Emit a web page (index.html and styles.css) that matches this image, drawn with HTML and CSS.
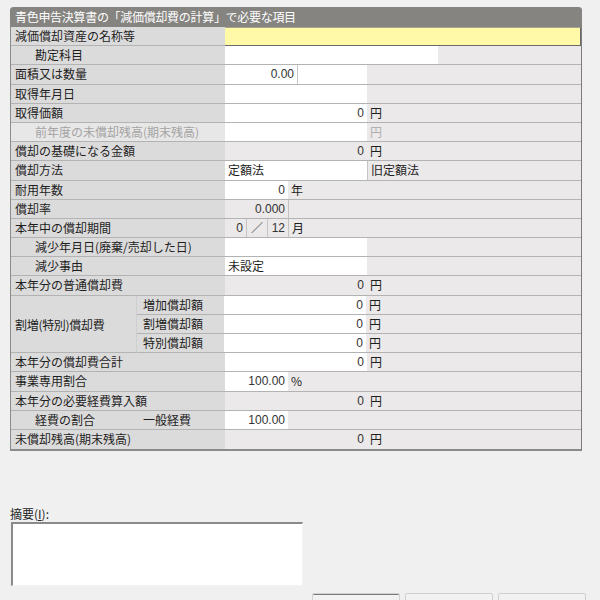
FILE: index.html
```html
<!DOCTYPE html>
<html lang="ja">
<head>
<meta charset="utf-8">
<link rel="stylesheet" href="styles.css">
</head>
<body>
<div class="panel">
  <div class="head">青色申告決算書の「減価償却費の計算」で必要な項目</div>
  <div class="row"><div class="lab">減価償却資産の名称等</div><div class="c yellow"></div></div>
  <div class="row"><div class="lab ind">勘定科目</div><div class="c w213 white"></div><div class="c fill"></div></div>
  <div class="row"><div class="lab">面積又は数量</div><div class="c w72 white num">0.00</div><div class="c w70 white bl"></div><div class="c fill"></div></div>
  <div class="row"><div class="lab">取得年月日</div><div class="c w142 white"></div><div class="c fill"></div></div>
  <div class="row"><div class="lab">取得価額</div><div class="c w142 white num">0</div><div class="c fill unit">円</div></div>
  <div class="row dis"><div class="lab ind">前年度の未償却残高(期末残高)</div><div class="c w142 white"></div><div class="c fill unit">円</div></div>
  <div class="row"><div class="lab">償却の基礎になる金額</div><div class="c w142 num">0</div><div class="c fill unit">円</div></div>
  <div class="row"><div class="lab">償却方法</div><div class="c w142 white txt">定額法</div><div class="c fill txt bl">旧定額法</div></div>
  <div class="row"><div class="lab">耐用年数</div><div class="c w63 white num">0</div><div class="c fill unit">年</div></div>
  <div class="row"><div class="lab">償却率</div><div class="c w63 num">0.000</div><div class="c fill bl"></div></div>
  <div class="row"><div class="lab">本年中の償却期間</div><div class="c w21 num">0</div><div class="c w21 bl slash">／</div><div class="c w21 bl num">12</div><div class="c fill unit bl">月</div></div>
  <div class="row"><div class="lab ind">減少年月日(廃棄/売却した日)</div><div class="c w142 white"></div><div class="c fill"></div></div>
  <div class="row"><div class="lab ind">減少事由</div><div class="c w142 white txt">未設定</div><div class="c fill"></div></div>
  <div class="row"><div class="lab">本年分の普通償却費</div><div class="c w142 num">0</div><div class="c fill unit">円</div></div>
  <div class="group">
    <div class="glab">割増(特別)償却費</div>
    <div class="gsub">
      <div class="row"><div class="sub">増加償却額</div><div class="c w142 white num">0</div><div class="c fill unit">円</div></div>
      <div class="row"><div class="sub">割増償却額</div><div class="c w142 white num">0</div><div class="c fill unit">円</div></div>
      <div class="row"><div class="sub">特別償却額</div><div class="c w142 white num">0</div><div class="c fill unit">円</div></div>
    </div>
  </div>
  <div class="row"><div class="lab">本年分の償却費合計</div><div class="c w142 white num">0</div><div class="c fill unit">円</div></div>
  <div class="row"><div class="lab">事業専用割合</div><div class="c w63 white num">100.00</div><div class="c fill unit">%</div></div>
  <div class="row"><div class="lab">本年分の必要経費算入額</div><div class="c w142 num">0</div><div class="c fill unit">円</div></div>
  <div class="row"><div class="lab2 ind">経費の割合</div><div class="sub">一般経費</div><div class="c w63 white num">100.00</div><div class="c fill"></div></div>
  <div class="row last"><div class="lab">未償却残高(期末残高)</div><div class="c w142 num">0</div><div class="c fill unit">円</div></div>
</div>

<div class="memo">
  <div class="memo-label">摘要(<u>I</u>):</div>
  <div class="memo-box"></div>
</div>

<div class="buttons">
  <div class="btn def"></div>
  <div class="btn"></div>
  <div class="btn"></div>
</div>
</body>
</html>
```

FILE: styles.css
```css
html, body {
  margin: 0;
  padding: 0;
  background: #f0f0f0;
  font-family: "Noto Sans CJK JP", "Noto Sans", sans-serif;
  font-size: 12px;
  color: #1e1e1e;
}
.panel {
  margin: 7px 0 0 10px;
  width: 572px;
  box-sizing: border-box;
  border-left: 1px solid #8c8c8c;
  border-right: 1px solid #7c7c7c;
  border-bottom: 2px solid #8a8a8a;
  border-radius: 4px 4px 0 0;
  background: #ebe9e9;
}
.head {
  height: 20px;
  margin-left: -1px;
  margin-right: -1px;
  background: #858480;
  border-radius: 4px 4px 0 0;
  color: #ffffff;
  line-height: 20px;
  padding-left: 5px;
  letter-spacing: -0.3px;
}
.row {
  display: flex;
  height: 19.2px;
  box-sizing: border-box;
  border-bottom: 1px solid #b3b3b3;
  line-height: 18px;
}
.row.last {
  border-bottom: none;
}
.lab {
  width: 214px;
  flex: none;
  background: #dcdbdb;
  padding-left: 4px;
  box-sizing: border-box;
  white-space: nowrap;
}
.lab.ind, .lab2.ind {
  padding-left: 24px;
}
.lab2 {
  width: 126px;
  flex: none;
  background: #dcdbdb;
  box-sizing: border-box;
  white-space: nowrap;
}
.sub {
  width: 88px;
  flex: none;
  background: #dcdbdb;
  padding-left: 6px;
  box-sizing: border-box;
  white-space: nowrap;
}
.dis .lab {
  background: #e8e7e7;
  color: #a3a3a3;
}
.dis .unit {
  color: #b0b0b0;
}
.c {
  flex: none;
  box-sizing: border-box;
  white-space: nowrap;
  overflow: hidden;
}
.fill {
  flex: 1;
}
.white {
  background: #ffffff;
}
.yellow {
  flex: 1;
  background: #fff9a8;
  border-top: 1px solid #a8a68a;
  border-right: 1px solid #6a6a6a;
  border-bottom: 1px solid #6a6a6a;
  margin-bottom: -1px;
}
.w213 { width: 213px; }
.w142 { width: 142px; }
.w72 { width: 72px; }
.w70 { width: 70px; }
.w63 { width: 63px; }
.w21 { width: 21px; }
.bl {
  border-left: 1px solid #c4c4c4;
}
.num {
  text-align: right;
  padding-right: 3px;
  font-family: "Liberation Sans", "Noto Sans", sans-serif;
  color: #333;
}
.txt {
  padding-left: 3px;
}
.unit {
  padding-left: 3px;
  font-family: "Noto Sans CJK JP", sans-serif;
}
.slash {
  text-align: center;
  color: #555;
}
.group {
  display: flex;
}
.glab {
  width: 126px;
  flex: none;
  height: 57.6px;
  box-sizing: border-box;
  background: #dcdbdb;
  border-bottom: 1px solid #b3b3b3;
  border-right: 1px solid #cfcfcf;
  padding-left: 4px;
  line-height: 57px;
  white-space: nowrap;
  letter-spacing: -0.3px;
}
.gsub {
  flex: 1;
}
.gsub .sub {
  width: 87px;
}
.memo {
  margin: 55px 0 0 10px;
}
.memo-label {
  line-height: 16px;
  height: 16px;
}
.memo-box {
  margin-top: 0;
  margin-left: 1px;
  width: 292px;
  height: 64px;
  box-sizing: border-box;
  background: #ffffff;
  border-top: 2px solid #8a8a8a;
  border-left: 2px solid #8a8a8a;
  border-right: 1px solid #f4f4f4;
  border-bottom: 1px solid #f4f4f4;
}
.buttons {
  display: flex;
  gap: 5px;
  margin: 7px 0 0 312px;
}
.btn {
  width: 88px;
  height: 24px;
  box-sizing: border-box;
  background: #f2f2f2;
  border: 1px solid #cfcfcf;
  border-radius: 2px;
}
.btn.def {
  border: 1px solid #d0d0d0;
  background: #f2f2f2;
  box-shadow: inset 0 5px 0 -4px #7a7a7a;
}
```
